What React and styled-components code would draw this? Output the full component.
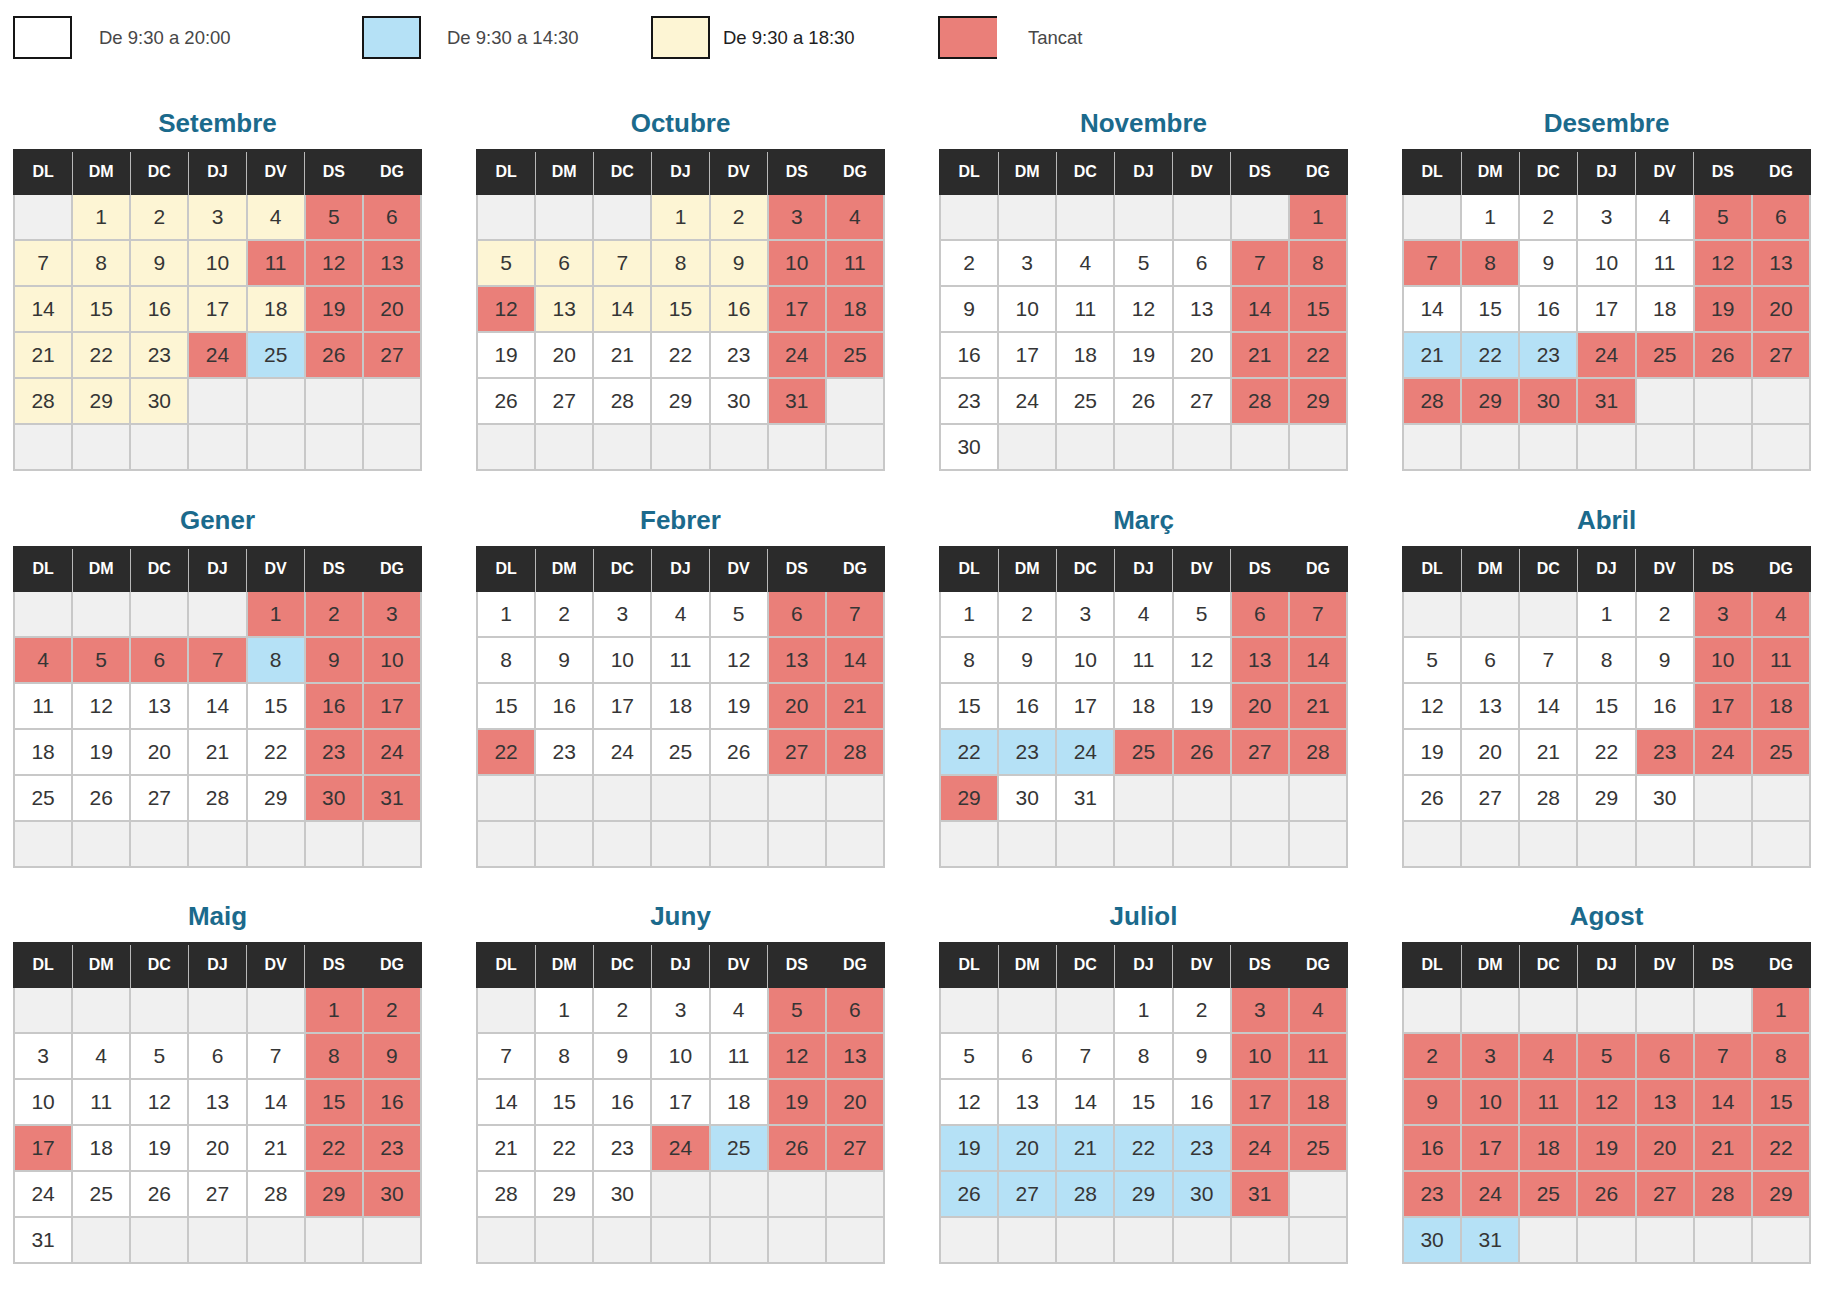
import React from 'react';
import styled, { createGlobalStyle } from 'styled-components';

const GlobalStyle = createGlobalStyle`
  html, body {
    margin: 0;
    padding: 0;
    background: #ffffff;
    font-family: 'Liberation Sans', Arial, sans-serif;
  }
`;

// cell colours
const FILL = {
  w: '#ffffff',
  y: '#fdf5d4',
  b: '#b5e1f6',
  r: '#ea7f79',
  e: '#f0f0f0'
};

const WEEKDAYS = ['DL', 'DM', 'DC', 'DJ', 'DV', 'DS', 'DG'];

const range = (a, b) => Array.from({ length: b - a + 1 }, (_, i) => a + i);

// start = weekday index of day 1 (0 = dilluns)
const months = [
  { name: 'Setembre', start: 1, days: 30, base: 'y', red: [5, 6, 11, 12, 13, 19, 20, 24, 26, 27], blue: [25] },
  {
    name: 'Octubre',
    start: 3,
    days: 31,
    base: 'w',
    yellow: [1, 2, 5, 6, 7, 8, 9, 13, 14, 15, 16],
    red: [3, 4, 10, 11, 12, 17, 18, 24, 25, 31],
    blue: []
  },
  { name: 'Novembre', start: 6, days: 30, base: 'w', red: [1, 7, 8, 14, 15, 21, 22, 28, 29], blue: [] },
  {
    name: 'Desembre',
    start: 1,
    days: 31,
    base: 'w',
    red: [5, 6, 7, 8, 12, 13, 19, 20, 24, 25, 26, 27, 28, 29, 30, 31],
    blue: [21, 22, 23]
  },
  { name: 'Gener', start: 4, days: 31, base: 'w', red: [1, 2, 3, 4, 5, 6, 7, 9, 10, 16, 17, 23, 24, 30, 31], blue: [8] },
  { name: 'Febrer', start: 0, days: 28, base: 'w', red: [6, 7, 13, 14, 20, 21, 22, 27, 28], blue: [] },
  { name: 'Març', start: 0, days: 31, base: 'w', red: [6, 7, 13, 14, 20, 21, 25, 26, 27, 28, 29], blue: [22, 23, 24] },
  { name: 'Abril', start: 3, days: 30, base: 'w', red: [3, 4, 10, 11, 17, 18, 23, 24, 25], blue: [] },
  { name: 'Maig', start: 5, days: 31, base: 'w', red: [1, 2, 8, 9, 15, 16, 17, 22, 23, 29, 30], blue: [] },
  { name: 'Juny', start: 1, days: 30, base: 'w', red: [5, 6, 12, 13, 19, 20, 24, 26, 27], blue: [25] },
  {
    name: 'Juliol',
    start: 3,
    days: 31,
    base: 'w',
    red: [3, 4, 10, 11, 17, 18, 24, 25, 31],
    blue: [...range(19, 23), ...range(26, 30)]
  },
  { name: 'Agost', start: 6, days: 31, base: 'w', red: range(1, 29), blue: [30, 31] }
];

const legend = [
  { fill: 'w', label: 'De 9:30 a 20:00', width: 349, gap: 27 },
  { fill: 'b', label: 'De 9:30 a 14:30', width: 289, gap: 26 },
  { fill: 'y', label: 'De 9:30 a 18:30', width: 287, gap: 13, dark: true },
  { fill: 'r', label: 'Tancat', width: 300, gap: 31, open: true }
];

/* legend */
const Page = styled.div`
  width: 1825px;
  min-height: 1292px;
  box-sizing: border-box;
`;

const Legend = styled.div`
  display: flex;
  align-items: center;
  padding: 16px 0 0 13px;
`;

const LegendItem = styled.div`
  display: flex;
  align-items: center;
  width: ${p => p.$width}px;
  gap: ${p => p.$gap}px;
`;

const Swatch = styled.div`
  width: 59px;
  height: 43px;
  box-sizing: border-box;
  background: ${p => FILL[p.$fill]};
  border: 2px solid #151515;
  border-right: ${p => (p.$open ? 'none' : '2px solid #151515')};
`;

const LegendText = styled.span`
  font-size: 18.5px;
  color: ${p => (p.$dark ? '#1e1e1e' : '#474747')};
`;

/* calendar */
const Year = styled.div`
  display: grid;
  grid-template-columns: repeat(4, 409px);
  column-gap: 54px;
  row-gap: 28.5px;
  padding: 44px 0 0 13px;
`;

const Month = styled.div`
  display: flex;
  flex-direction: column;
  gap: 6px;
`;

const MonthTitle = styled.div`
  height: 40px;
  line-height: 40px;
  text-align: center;
  font-size: 26px;
  font-weight: bold;
  color: #1b6a8c;
`;

const Table = styled.div`
  display: flex;
  flex-direction: column;
`;

const HeaderRow = styled.div`
  display: grid;
  grid-template-columns: repeat(7, 1fr);
  column-gap: 2px;
  padding: 0 2px;
  height: 46px;
  background: #2b2b2b;
`;

const HeaderCell = styled.div`
  position: relative;
  display: flex;
  align-items: center;
  justify-content: center;
  color: #ffffff;
  font-size: 16px;
  font-weight: bold;

  &::after {
    content: '';
    display: ${p => (p.$divider ? 'block' : 'none')};
    position: absolute;
    top: 3px;
    bottom: 0;
    right: -1.5px;
    width: 1px;
    background: #b8b8b8;
  }
`;

const Body = styled.div`
  display: grid;
  grid-template-columns: repeat(7, 1fr);
  grid-auto-rows: 44px;
  gap: 2px;
  padding: 0 2px 2px;
  background: #c8c8c8;
`;

const DayCell = styled.div`
  display: flex;
  align-items: center;
  justify-content: center;
  background: ${p => FILL[p.$fill]};
  font-size: 21px;
  color: #353535;
`;

const buildCells = m => {
  const cells = [];
  for (let i = 0; i < 42; i++) {
    const day = i - m.start + 1;
    if (day < 1 || day > m.days) {
      cells.push({ key: i, day: '', fill: 'e' });
      continue;
    }
    let fill = m.base;
    if (m.yellow && m.yellow.includes(day)) fill = 'y';
    if (m.red.includes(day)) fill = 'r';
    if (m.blue.includes(day)) fill = 'b';
    cells.push({ key: i, day, fill });
  }
  return cells;
};

const MonthCard = ({ month }) => (
  <Month>
    <MonthTitle>{month.name}</MonthTitle>
    <Table>
      <HeaderRow>
        {WEEKDAYS.map((d, i) => (
          <HeaderCell key={d} $divider={i < 5}>
            {d}
          </HeaderCell>
        ))}
      </HeaderRow>
      <Body>
        {buildCells(month).map(c => (
          <DayCell key={c.key} $fill={c.fill}>
            {c.day}
          </DayCell>
        ))}
      </Body>
    </Table>
  </Month>
);

const App = () => (
  <>
    <GlobalStyle />
    <Page>
      <Legend>
        {legend.map(item => (
          <LegendItem key={item.label} $width={item.width} $gap={item.gap}>
            <Swatch $fill={item.fill} $open={item.open} />
            <LegendText $dark={item.dark}>{item.label}</LegendText>
          </LegendItem>
        ))}
      </Legend>
      <Year>
        {months.map(m => (
          <MonthCard key={m.name} month={m} />
        ))}
      </Year>
    </Page>
  </>
);

export default App;
